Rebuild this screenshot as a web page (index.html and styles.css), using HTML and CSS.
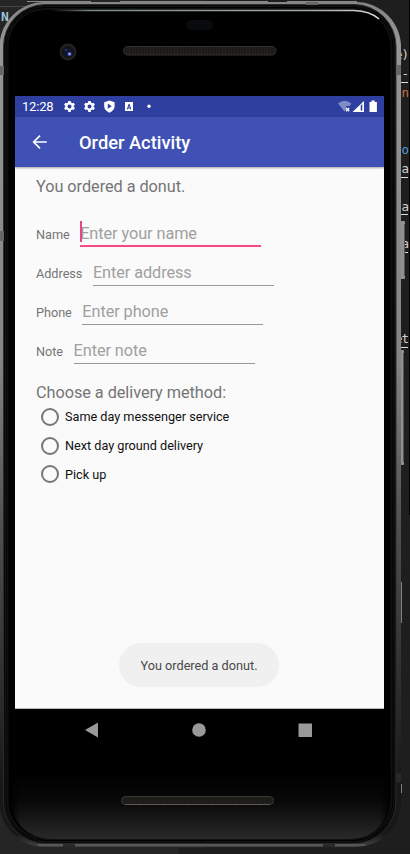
FILE: index.html
```html
<!DOCTYPE html>
<html lang="en">
<head>
<meta charset="utf-8">
<title>Order Activity</title>
<link rel="stylesheet" href="styles.css">
</head>
<body>
<div class="desk">
  <span class="code-left">N</span>
  <div class="code-right"><p>e)</p><p class="u">-</p><p class="orange">n</p><p></p><p></p><p class="blue">o</p><p class="u">a</p><p></p><p class="u">a</p><p></p><p class="u">a</p><p></p><p></p><p></p><p></p><p class="u">et</p></div>
  <svg class="frame" width="410" height="854" viewBox="0 0 410 854">
    <defs>
      <linearGradient id="metal" x1="0" y1="0" x2="0" y2="1">
        <stop offset="0" stop-color="#858587"/><stop offset=".05" stop-color="#969696"/><stop offset=".42" stop-color="#858585"/><stop offset=".62" stop-color="#505050"/><stop offset=".8" stop-color="#303030"/><stop offset=".93" stop-color="#171717"/><stop offset=".985" stop-color="#181818"/><stop offset="1" stop-color="#444"/>
      </linearGradient>
      <linearGradient id="chin" x1="0" y1="0" x2="0" y2="1">
        <stop offset="0" stop-color="#000"/><stop offset=".45" stop-color="#080808"/><stop offset="1" stop-color="#292929"/>
      </linearGradient>
      <linearGradient id="shine" x1="0" x2="1">
        <stop offset="0" stop-color="#829090" stop-opacity="0"/><stop offset=".12" stop-color="#7d8888"/><stop offset=".8" stop-color="#a2aaaa"/><stop offset="1" stop-color="#ddd"/>
      </linearGradient>
      <linearGradient id="edge" x1="0" x2="1">
        <stop offset="0" stop-color="#000"/><stop offset=".03" stop-color="#000" stop-opacity="0"/><stop offset=".97" stop-color="#000" stop-opacity="0"/><stop offset="1" stop-color="#000"/>
      </linearGradient>
      <pattern id="mesh" width="3" height="4" patternUnits="userSpaceOnUse"><rect width="3" height="4" fill="#1b1a17"/><path d="M.5 0v4" stroke="#24221e"/></pattern>
    </defs>
    <path d="M409.5 0v515" stroke="#000"/>
    <path d="M0 6.5H27" stroke="#454545"/>
    <path d="M179 848h231v6H179z" fill="#1d1d1d"/>
    <g fill="#909090"><rect x="400" y="221" width="5" height="58" rx="1"/><rect x="400" y="350" width="4" height="115" rx="1"/></g>
    <path d="M404.5 224v52M403.5 353v109" stroke="#555"/>
    <path d="M401.5 582v41M401.5 784v9" stroke="#808080"/>
    <path d="M27 1.500H91M120 1.500H268M287 1.500H357" stroke="#8c8484"/>
    <rect x="-.5" y="2" width="401.500" height="845" rx="45" fill="url(#metal)"/>
    <rect x="3.500" y="4.500" width="392.500" height="839" rx="42" fill="#080808" stroke="#2c2c2c"/>
    <rect x="5.500" y="6.500" width="388.500" height="835" rx="41" fill="#000" stroke="#141414"/>
    <rect x="7.500" y="9" width="384" height="830" rx="38" fill="#000" stroke="#101010" stroke-width="2"/>
    <path d="M9 770V792Q12 838 52 839H350Q388 838 391 792V770Z" fill="url(#chin)"/>
    <path d="M9 770V792Q12 838 52 839H350Q388 838 391 792V770Z" fill="url(#edge)"/>
    <path d="M38 845H365" stroke="#565656" stroke-width="2"/>
    <path d="M51 10.500H354Q370 11 379 19" fill="none" stroke="url(#shine)" stroke-width="1.500"/>
    <path d="M0 66h4v9H0zM396 65h5v10h-5zM306 2h12v3h-12zM0 231h4v10H0z" fill="#666"/>
    <path d="M396 773h5v9h-5zM63 843h12v4H63zM323 843h12v4h-12z" fill="#292929"/>
    <rect x="186" y="20" width="27" height="10" rx="5" fill="#080a0e"/>
    <circle cx="68" cy="52" r="7.500" fill="#161617" stroke="#222" stroke-width="2"/>
    <circle cx="68" cy="52" r="4.500" fill="#10142e"/><circle cx="66" cy="50" r="1" fill="#283c90"/><circle cx="69.500" cy="54" r="2" fill="#4055b8"/><circle cx="69.500" cy="54" r="1" fill="#a9b9ff"/>
    <rect x="123.500" y="46.500" width="152.500" height="8.500" rx="4.200" fill="url(#mesh)" stroke="#33322f"/>
    <rect x="121.500" y="796.500" width="152" height="8" rx="4" fill="url(#mesh)" stroke="#3b3935"/>
    <path d="M125 804.500H270" stroke="#5c5953"/>
  </svg>

  <main class="screen">
    <header class="status">
      <time>12:28</time>
      <svg width="92" height="21" viewBox="0 0 92 21" fill="#fff">
        <g id="gear"><path fill-rule="evenodd" d="M5.300 5h2.400l.3 1.500 1.300.7 1.400-.5 1.200 2-1.100 1v1.400l1.100 1-1.200 2-1.400-.5-1.300.7L7.700 16H5.300L5 14.300l-1.300-.7-1.400.5-1.200-2 1.100-1V9.700l-1.100-1 1.200-2 1.400.5L5 6.500zM6.500 8.400a2 2 0 1 0 0 4 2 2 0 0 0 0-4z"/></g>
        <use href="#gear" x="20"/>
        <path fill-rule="evenodd" d="M46.400 4.500 51.600 6.300V10.500Q51.300 14.500 46.400 16.800 41.500 14.500 41.200 10.500V6.300zM44.800 7.600v5.200l4-2.600z"/>
        <path fill-rule="evenodd" d="M62 6h8v9h-8zM63.800 13.500h1l.4-1.100h1.700l.4 1.100h1L66.600 8h-1zm1.700-2 .6-1.700.6 1.700z"/>
        <circle cx="86" cy="10.300" r="1.700"/>
      </svg>
      <svg class="signals" width="42" height="21" viewBox="0 0 42 21" fill="#fff">
        <path opacity=".4" d="M0 7.500Q6.500 2 13.500 7.500L11.500 10H8V13.500L6.500 15.500z"/>
        <path d="m8 12 3.200 3.200m0-3.200L8 15.200" stroke="#fff" stroke-width="1.300"/>
        <path d="M14.500 16 26 5v11zM22.700 9.500v5h1.600v-6.500z" fill-rule="evenodd"/>
        <path d="M31.500 6H33.500V4.500H36.700V6H38.900V16H31.500z"/>
      </svg>
    </header>
    <header class="appbar">
      <svg width="16" height="16" viewBox="0 0 16 16" fill="none" stroke="#fff" stroke-width="1.700"><path d="M14.800 8H2M8 1.700 1.700 8 8 14.300"/></svg>
      <h1>Order Activity</h1>
    </header>
    <section class="content">
      <p class="heading ordered">You ordered a donut.</p>
      <div class="row"><label>Name</label><span class="field active">Enter your name</span></div>
      <div class="row"><label>Address</label><span class="field">Enter address</span></div>
      <div class="row"><label>Phone</label><span class="field">Enter phone</span></div>
      <div class="row"><label>Note</label><span class="field">Enter note</span></div>
      <p class="heading choose">Choose a delivery method:</p>
      <div class="option"><i></i><span>Same day messenger service</span></div>
      <div class="option"><i></i><span>Next day ground delivery</span></div>
      <div class="option"><i></i><span>Pick up</span></div>
    </section>
    <div class="toast">You ordered a donut.</div>
  </main>
  <nav class="nav">
    <svg width="369" height="42" viewBox="0 0 369 42" fill="#999"><path d="M70 21 83 13.500V28.500z"/><circle cx="184" cy="21" r="6.800"/><rect x="283.500" y="14.500" width="13.500" height="13.500" rx=".5"/></svg>
  </nav>
</div>
</body>
</html>
```
FILE: styles.css
```css
* { box-sizing: border-box; }
body { margin: 0; background: #222; font-family: Roboto, sans-serif; }
p, h1 { margin: 0; }
svg { display: block; }
.desk { position: relative; width: 410px; height: 854px; overflow: hidden; padding: 96px 26px 0 15px; background: linear-gradient(90deg, #252525 50%, #1e1e1e 50%); }
.frame { position: absolute; left: 0; top: 0; }
.code-left { position: absolute; left: 1px; top: 9px; font: bold 13px/16px "DejaVu Sans Mono", monospace; color: #9fc3dc; }
.code-right { position: absolute; right: 1px; top: 45px; width: 16px; font: 12.500px/19px "DejaVu Sans Mono", monospace; letter-spacing: -1px; padding-right: 1px; color: #d0d0d0; text-align: right; }
.code-right p { height: 18.950px; }
.code-right .u { box-shadow: inset 0 -1px #ddd; }
.code-right .orange { color: #c96c4a; }
.code-right .blue { color: #4f9fe0; }

.screen { position: relative; display: flex; flex-direction: column; width: 369px; height: 613px; background: #fafafa; border-bottom: 1px solid #bbb; }
.status { display: flex; height: 21px; background: #2e3f9f; color: #fff; padding-left: 7px; }
.status time { width: 41px; font-size: 13px; line-height: 22px; letter-spacing: -.2px; }
.signals { margin-left: auto; margin-right: 4px; }
.appbar { display: flex; align-items: center; height: 50px; padding-left: 17px; background: #4051b5; color: #fff; box-shadow: 0 1px 2px #0005; }
.appbar h1 { margin-left: 31px; padding-top: 2px; font-size: 18.300px; font-weight: 500; line-height: 24px; }
.content { padding: 9px 0 0 21px; color: #757575; }
.heading { font-size: 16.300px; line-height: 21px; letter-spacing: -.05px; white-space: nowrap; }
.ordered { margin-bottom: 19px; }
.row { display: flex; align-items: baseline; height: 39px; gap: 10.500px; }
.row label { font-size: 12.700px; letter-spacing: -.03px; }
.field { position: relative; width: 181px; height: 31px; padding-top: 8px; border-bottom: 1px solid #999; color: #a0a0a0; font-size: 16.300px; line-height: 20px; letter-spacing: -.08px; }
.active { border-bottom: 2px solid #f94983; }
.active::before { content: ""; position: absolute; left: 0; top: 5px; width: 2px; height: 21px; background: #e94780; }
.choose { margin-top: 10px; }
.option { position: relative; top: -.5px; display: flex; align-items: center; height: 28.800px; padding-left: 5px; gap: 6px; color: #111; font-size: 12.700px; letter-spacing: -.02px; }
.option i { width: 18px; height: 18px; border: 2px solid #777; border-radius: 50%; }
.toast { position: absolute; left: 104px; top: 547px; width: 160px; height: 44px; border-radius: 22px; background: #f0f0f0; color: #484848; font-size: 12.700px; line-height: 45px; text-align: center; }
.nav { position: relative; width: 369px; height: 42px; background: #000; }
```
